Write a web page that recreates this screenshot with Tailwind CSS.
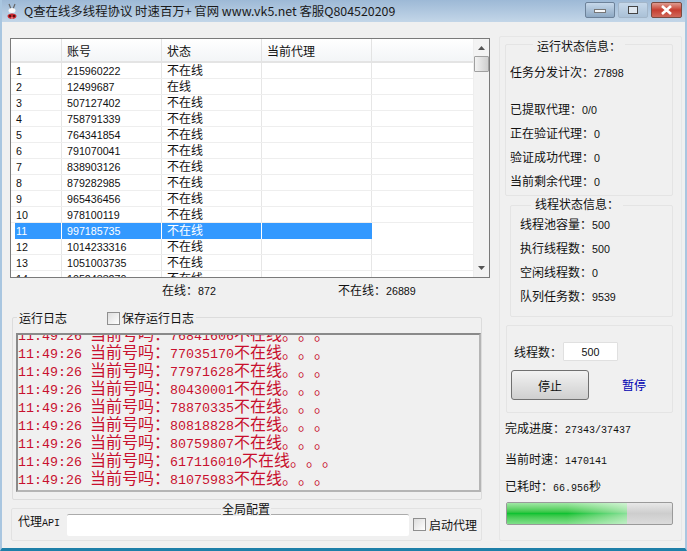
<!DOCTYPE html>
<html lang="zh-CN">
<head>
<meta charset="UTF-8">
<title>Q查在线多线程协议</title>
<script src="https://cdn.jsdelivr.net/npm/@tailwindcss/browser@4"></script>
</head>
<body class="m-0 overflow-hidden bg-[#f0f0f0]">
<div class="w-[687px] h-[551px] flex flex-col overflow-hidden font-['Noto_Sans_CJK_SC',sans-serif] text-[12px] text-[#111] bg-[#f0f0f0] border-x-2 border-b-[3px] border-x-[#a9c6e0] border-b-[#1d7fa8] [text-spacing-trim:space-all]">
  <!-- title bar -->
  <div class="h-[22px] shrink-0 -mx-[2px] flex items-center bg-gradient-to-b from-[#9db9d6] to-[#c3d6e8]">
    <svg class="ml-[4px] mt-[1px]" width="16" height="17" viewBox="0 0 16 17">
      <path d="M5 1 L7 6 M11 1 L9 6" stroke="#666" stroke-width="1.2"/>
      <ellipse cx="8" cy="7.5" rx="3.5" ry="2.5" fill="#f8f8f8"/>
      <path d="M3.5 13 C3.5 9.5 12.5 9.5 12.5 13 C12.5 17 3.5 17 3.5 13 Z" fill="#c9262c"/>
      <circle cx="6" cy="13" r="1.1" fill="#3a1010"/><circle cx="10" cy="13" r="1.1" fill="#3a1010"/>
      <circle cx="8" cy="15" r=".8" fill="#f0d0d0"/>
    </svg>
    <span class="ml-[4px] text-[12.4px] text-[#1a1a1a] whitespace-nowrap">Q查在线多线程协议 时速百万+ 官网 www.vk5.net 客服Q804520209</span>
    <div class="ml-auto mr-[5px] mt-[-3px] flex gap-[3px]">
      <div class="w-[30px] h-[16px] rounded-[2px] border border-[#6d8299] bg-gradient-to-b from-[#c6d8ea] to-[#8ea9c4] flex items-center justify-center"><span class="block w-[12px] h-[4px] mt-[3px] bg-white/90 border border-[#777]"></span></div>
      <div class="w-[30px] h-[16px] rounded-[2px] border border-[#a3b6c9] bg-gradient-to-b from-[#c6d8ea] to-[#aac1d7] flex items-center justify-center"><span class="block w-[10px] h-[8px] border border-[#444] bg-[#dfe7ef]"></span></div>
      <div class="w-[31px] h-[16px] rounded-[2px] border border-[#7a4a40] bg-gradient-to-b from-[#dd9a90] via-[#c63d30] to-[#d0685a] flex items-center justify-center">
        <svg width="13" height="10" viewBox="0 0 13 10"><path d="M2 1 L11 9 M11 1 L2 9" stroke="#fff" stroke-width="2.6"/></svg>
      </div>
    </div>
  </div>

  <div class="flex-1 flex min-h-0">
    <!-- left column -->
    <div class="w-[490px] shrink-0 pl-[8px] pt-[16px] flex flex-col">
      <!-- account table -->
      <div class="w-[480px] h-[240px] shrink-0 border border-[#7a7a7a] bg-white flex overflow-hidden">
        <div class="w-[462px] shrink-0 overflow-hidden">
          <div class="flex h-[24px] border-b-2 border-[#e4e4e4] bg-gradient-to-b from-white to-[#f3f5f7] text-[12px] leading-[23px]">
            <span class="w-[51px] border-r border-[#e3e3e3]"></span>
            <span class="w-[100px] pl-[5px] border-r border-[#e3e3e3]">账号</span>
            <span class="w-[100px] pl-[5px] border-r border-[#e3e3e3]">状态</span>
            <span class="w-[110px] pl-[5px] border-r border-[#e3e3e3]">当前代理</span>
          </div>
          <div id="rows" class="font-['Liberation_Sans',sans-serif] text-[10.7px]"></div>
        </div>
        <!-- scrollbar -->
        <div class="flex-1 bg-[#f3f3f3] flex flex-col items-center border-l border-[#eee]">
          <svg class="mt-[6px]" width="9" height="6" viewBox="0 0 9 6"><path d="M4.5 1 L8 5 H1 Z" fill="#555"/></svg>
          <div class="w-[15px] h-[16px] mt-[5px] rounded-[1px] border border-[#a0a0a0] bg-gradient-to-r from-[#f2f2f2] to-[#cfcfcf]"></div>
          <svg class="mt-auto mb-[6px]" width="9" height="6" viewBox="0 0 9 6"><path d="M4.5 5 L8 1 H1 Z" fill="#555"/></svg>
        </div>
      </div>
      <!-- counters -->
      <div class="flex h-[25px] shrink-0 items-center pl-[152px]">
        <span class="w-[176px] whitespace-nowrap">在线：<span class="font-['Liberation_Sans'] text-[10.7px]">872</span></span>
        <span class="whitespace-nowrap">不在线：<span class="font-['Liberation_Sans'] text-[10.7px]">26889</span></span>
      </div>
      <!-- log -->
      <div class="relative mt-[14px] ml-[2px] w-[470px] h-[183px] shrink-0 border border-[#dcdcdc] rounded-[2px]">
        <div class="absolute -top-[8px] left-[4px] flex items-center bg-[#f0f0f0] px-[2px] h-[16px] leading-none">
          <span>运行日志</span>
          <span class="ml-[40px] flex items-center gap-[2px]"><span class="w-[13px] h-[13px] border border-[#8f8f8f] bg-gradient-to-br from-[#ddd] to-white"></span>保存运行日志</span>
        </div>
        <div class="mt-[15px] ml-[3px] w-[465px] h-[159px] border-2 border-[#8a8a8a] border-r-[#b5b5b5] border-b-[#b5b5b5] bg-[#f0f0f0] overflow-hidden">
          <div id="log" class="-mt-[8px] font-['Liberation_Mono','Noto_Sans_CJK_SC',monospace] text-[13.33px] text-[#c8102e]"></div>
        </div>
      </div>
      <!-- global config -->
      <div class="relative mt-[8px] ml-[1px] w-[471px] h-[33px] shrink-0 border border-[#e2e2e2] rounded-[2px] flex items-center pl-[6px]">
        <span class="absolute -top-[7px] left-[209px] px-[1px] bg-[#f0f0f0] leading-[14px]">全局配置</span>
        <span class="-mt-[6px] w-[49px] whitespace-nowrap">代理<span class="font-['Liberation_Mono'] text-[10px]">API</span></span>
        <div class="w-[342px] h-[22px] bg-white rounded-[2px] border-t border-[#ababab]"></div>
        <span class="ml-[4px] flex items-center gap-[3px] whitespace-nowrap"><span class="w-[13px] h-[13px] border border-[#8f8f8f] bg-gradient-to-br from-[#ddd] to-white"></span>启动代理</span>
      </div>
    </div>

    <!-- right column -->
    <div class="ml-[7px] mt-[14px] w-[183px] h-[505px] pt-[7px] pl-[5px] flex flex-col border border-[#e6e6e6] rounded-[2px]">
      <div class="relative w-[168px] h-[152px] shrink-0 border border-[#e4e4e4] rounded-[2px] pl-[4px]">
        <span class="absolute -top-[6px] left-[27px] px-[4px] bg-[#f0f0f0] leading-[14px]">运行状态信息：</span>
        <div class="mt-[19px] h-[16px] leading-[16px] whitespace-nowrap">任务分发计次：<span class="font-['Liberation_Sans'] text-[10.7px]">27898</span></div>
        <div class="mt-[21px] h-[16px] leading-[16px]">已提取代理：<span class="font-['Liberation_Sans'] text-[10.7px]">0/0</span></div>
        <div class="mt-[8px] h-[16px] leading-[16px]">正在验证代理：<span class="font-['Liberation_Sans'] text-[10.7px]">0</span></div>
        <div class="mt-[8px] h-[16px] leading-[16px]">验证成功代理：<span class="font-['Liberation_Sans'] text-[10.7px]">0</span></div>
        <div class="mt-[8px] h-[16px] leading-[16px]">当前剩余代理：<span class="font-['Liberation_Sans'] text-[10.7px]">0</span></div>
      </div>
      <div class="relative mt-[9px] ml-[5px] w-[163px] h-[112px] shrink-0 border border-[#e4e4e4] rounded-[2px] pl-[9px]">
        <span class="absolute -top-[9px] left-[20px] px-[4px] bg-[#f0f0f0] leading-[14px]">线程状态信息：</span>
        <div class="mt-[10px] h-[16px] leading-[16px]">线程池容量：<span class="font-['Liberation_Sans'] text-[10.7px]">500</span></div>
        <div class="mt-[8px] h-[16px] leading-[16px]">执行线程数：<span class="font-['Liberation_Sans'] text-[10.7px]">500</span></div>
        <div class="mt-[8px] h-[16px] leading-[16px]">空闲线程数：<span class="font-['Liberation_Sans'] text-[10.7px]">0</span></div>
        <div class="mt-[8px] h-[16px] leading-[16px]">队列任务数：<span class="font-['Liberation_Sans'] text-[10.7px]">9539</span></div>
      </div>
      <div class="mt-[8px] ml-[1px] w-[167px] h-[88px] shrink-0 border border-[#e4e4e4] rounded-[2px] pl-[4px]">
        <div class="mt-[16px] pl-[3px] flex items-center">
          <span>线程数：</span>
          <span class="w-[55px] h-[19px] bg-white border border-[#e0e0e0] rounded-[1px] text-center font-['Liberation_Sans'] text-[10.7px] leading-[18px] ml-[1px]">500</span>
        </div>
        <div class="flex items-center mt-[9px]">
          <div class="w-[78px] h-[30px] rounded-[3px] border border-[#707070] bg-gradient-to-b from-[#f2f2f2] to-[#cfcfcf] text-center leading-[30px]">停止</div>
          <span class="ml-[33px] text-[#0000b0]">暂停</span>
        </div>
      </div>
      <div class="mt-[7px] h-[16px] shrink-0 leading-[16px] whitespace-nowrap">完成进度：<span class="font-['Liberation_Mono'] text-[10px]">27343/37437</span></div>
      <div class="mt-[15px] h-[16px] shrink-0 leading-[16px] whitespace-nowrap">当前时速：<span class="font-['Liberation_Mono'] text-[10px]">1470141</span></div>
      <div class="mt-[11px] h-[16px] shrink-0 leading-[16px] whitespace-nowrap">已耗时：<span class="font-['Liberation_Mono'] text-[10px]">66.956</span>秒</div>
      <div class="mt-[8px] ml-[1px] w-[167px] h-[23px] shrink-0 rounded-[2px] border border-[#9a9a9a] bg-gradient-to-b from-[#e8e8e8] via-[#cdcdcd] to-[#dcdcdc] overflow-hidden">
        <div class="w-[120px] h-full bg-gradient-to-b from-[#9fe8a4] via-[#0fc233] to-[#7fe08a]">
          <div class="w-full h-full bg-gradient-to-r from-transparent via-transparent to-white/50"></div>
        </div>
      </div>
    </div>
  </div>
</div>
<script>
  var accounts = ['215960222','12499687','507127402','758791339','764341854','791070041','838903126','879282985','965436456','978100119','997185735','1014233316','1051003735','1052433270'];
  var rows = '';
  accounts.forEach(function(id, i) {
    var state = i == 1 ? '在线' : '不在线';
    if (i == 10) {
      rows += '<div class="flex h-[16px] leading-[16px] text-white"><span class="w-[47px] ml-[4px] pl-[1px] bg-[#3399ff] border-r border-white">' + (i + 1) + '</span><span class="w-[100px] pl-[5px] bg-[#3399ff] border-r border-white">' + id + '</span><span class="w-[100px] pl-[5px] bg-[#3399ff] border-r border-white font-[\'Noto_Sans_CJK_SC\'] text-[12px]">' + state + '</span><span class="w-[110px] bg-[#3399ff]"></span></div>';
    } else {
      rows += '<div class="flex h-[16px] leading-[16px] border-b border-[#eee]"><span class="w-[51px] pl-[5px] border-r border-[#e6e6e6]">' + (i + 1) + '</span><span class="w-[100px] pl-[5px] border-r border-[#e6e6e6]">' + id + '</span><span class="w-[100px] pl-[5px] border-r border-[#e6e6e6] font-[\'Noto_Sans_CJK_SC\'] text-[12px]">' + state + '</span><span class="w-[110px] border-r border-[#e6e6e6]"></span></div>';
    }
  });
  document.getElementById('rows').innerHTML = rows;

  var numbers = ['76841606','77035170','77971628','80430001','78870335','80818828','80759807','617116010','81075983'];
  var lines = '';
  numbers.forEach(function(n) {
    lines += '<div class="h-[18px] leading-[18px] whitespace-nowrap">11:49:26 <span class="font-[\'Noto_Sans_CJK_SC\'] text-[16px]">当前号吗：</span>' + n + '<span class="font-[\'Noto_Sans_CJK_SC\'] text-[16px]">不在线。。。</span></div>';
  });
  document.getElementById('log').innerHTML = lines;
</script>
</body>
</html>
